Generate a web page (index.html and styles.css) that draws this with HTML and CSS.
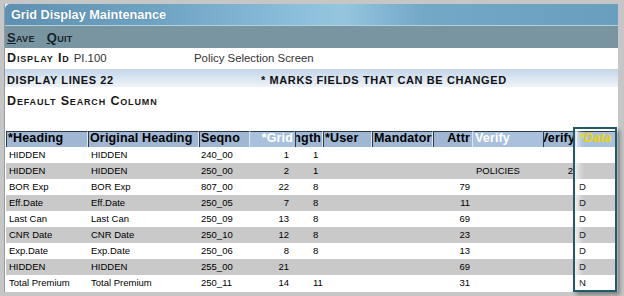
FILE: index.html
```html
<!DOCTYPE html>
<html>
<head>
<meta charset="utf-8">
<link rel="stylesheet" href="styles.css">
</head>
<body>
<div class="window">
  <div class="titlebar">Grid Display Maintenance</div>
  <div class="toolbar"><span class="cmd"><u>S</u>ave</span><span class="cmd"><u>Q</u>uit</span></div>
  <div class="idrow"><span class="idcell"><span class="sc">Display Id</span><span class="idval">PI.100</span></span><span class="desc">Policy Selection Screen</span></div>
  <div class="linesrow"><span class="linescell">DISPLAY LINES 22</span><span>* MARKS FIELDS THAT CAN BE CHANGED</span></div>
  <div class="searchrow"><span class="sc">Default Search Column</span></div>
  <table class="grid">
    <colgroup>
      <col class="c1"><col class="c2"><col class="c3"><col class="c4"><col class="c5"><col class="c6"><col class="c7"><col class="c8"><col class="c9"><col class="c10"><col class="c11">
    </colgroup>
    <thead>
      <tr>
        <th><div class="h">*Heading</div></th>
        <th><div class="h">Original Heading</div></th>
        <th><div class="h">Seqno</div></th>
        <th class="hl"><div class="h right">*Grid</div></th>
        <th><div class="h right">Length</div></th>
        <th><div class="h">*User</div></th>
        <th><div class="h">Mandatory</div></th>
        <th><div class="h right pr">Attr</div></th>
        <th class="hl"><div class="h">Verify</div></th>
        <th><div class="h right">Verify</div></th>
        <th class="hl data"><div class="h">*Data</div></th>
      </tr>
    </thead>
    <tbody>
      <tr><td class="t1">HIDDEN</td><td class="t2">HIDDEN</td><td class="t3">240_00</td><td class="t4">1</td><td class="t5">1</td><td></td><td></td><td class="t8"></td><td class="t9"></td><td class="t10"></td><td class="t11"></td></tr>
      <tr><td class="t1">HIDDEN</td><td class="t2">HIDDEN</td><td class="t3">250_00</td><td class="t4">2</td><td class="t5">1</td><td></td><td></td><td class="t8"></td><td class="t9">POLICIES</td><td class="t10">2</td><td class="t11"></td></tr>
      <tr><td class="t1">BOR Exp</td><td class="t2">BOR Exp</td><td class="t3">807_00</td><td class="t4">22</td><td class="t5">8</td><td></td><td></td><td class="t8">79</td><td class="t9"></td><td class="t10"></td><td class="t11">D</td></tr>
      <tr><td class="t1">Eff.Date</td><td class="t2">Eff.Date</td><td class="t3">250_05</td><td class="t4">7</td><td class="t5">8</td><td></td><td></td><td class="t8">11</td><td class="t9"></td><td class="t10"></td><td class="t11">D</td></tr>
      <tr><td class="t1">Last Can</td><td class="t2">Last Can</td><td class="t3">250_09</td><td class="t4">13</td><td class="t5">8</td><td></td><td></td><td class="t8">69</td><td class="t9"></td><td class="t10"></td><td class="t11">D</td></tr>
      <tr><td class="t1">CNR Date</td><td class="t2">CNR Date</td><td class="t3">250_10</td><td class="t4">12</td><td class="t5">8</td><td></td><td></td><td class="t8">23</td><td class="t9"></td><td class="t10"></td><td class="t11">D</td></tr>
      <tr><td class="t1">Exp.Date</td><td class="t2">Exp.Date</td><td class="t3">250_06</td><td class="t4">8</td><td class="t5">8</td><td></td><td></td><td class="t8">13</td><td class="t9"></td><td class="t10"></td><td class="t11">D</td></tr>
      <tr><td class="t1">HIDDEN</td><td class="t2">HIDDEN</td><td class="t3">255_00</td><td class="t4">21</td><td class="t5"></td><td></td><td></td><td class="t8">69</td><td class="t9"></td><td class="t10"></td><td class="t11">D</td></tr>
      <tr><td class="t1">Total Premium</td><td class="t2">Total Premium</td><td class="t3">250_11</td><td class="t4">14</td><td class="t5">11</td><td></td><td></td><td class="t8">31</td><td class="t9"></td><td class="t10"></td><td class="t11">N</td></tr>
    </tbody>
  </table>
  <div class="focus"></div>
</div>
</body>
</html>
```

FILE: styles.css
```css
html, body {
  margin: 0;
  padding: 0;
}
body {
  width: 624px;
  height: 296px;
  overflow: hidden;
  background: #c6c6c6;
  font-family: "Liberation Sans", Arial, sans-serif;
}
.window {
  position: relative;
  margin: 4px 0 0 4px;
  width: 613px;
  height: 288px;
  background: #fff;
  border-left: 1px solid #8e9da7;
}
.titlebar {
  height: 22px;
  line-height: 22px;
  padding-left: 6px;
  border-radius: 5px 0 0 0;
  background: linear-gradient(90deg, #5d90b2 0%, #6fa3c4 25%, #8cbfdb 48%, #96c6df 55%, #73a8c7 68%, #6a9ebe 100%);
  border-bottom: 1px solid #b6cfdd;
  box-sizing: border-box;
  color: #fff;
  font-weight: bold;
  font-size: 12.7px;
  text-shadow: 0 0 1px rgba(40, 80, 110, 0.5);
}
.toolbar {
  height: 22px;
  box-sizing: border-box;
  padding: 2px 0 0 2px;
  line-height: 20px;
  background: #7995a1;
  display: flex;
  gap: 12px;
  font-weight: bold;
  font-variant: small-caps;
  font-size: 13px;
  letter-spacing: 0.3px;
  color: #15242d;
}
.idrow {
  height: 21px;
  line-height: 21px;
  padding-left: 2px;
  display: flex;
  font-size: 11.4px;
  color: #222;
}
.idcell {
  width: 187px;
  display: flex;
  gap: 4px;
}
.idval {
  color: #333;
}
.sc {
  font-weight: bold;
  font-variant: small-caps;
  font-size: 12.5px;
  letter-spacing: 0.85px;
  color: #1a1a1a;
}
.desc {
  color: #333;
}
.linesrow {
  height: 18px;
  box-sizing: border-box;
  padding: 2px 0 0 2px;
  line-height: 18px;
  display: flex;
  background: linear-gradient(180deg, #c2d5e7 0%, #dce7f2 55%, #eef3f9 100%);
  font-weight: bold;
  font-size: 11px;
  letter-spacing: 0.6px;
  color: #111;
  white-space: nowrap;
}
.linescell {
  width: 254px;
}
.searchrow {
  height: 23px;
  box-sizing: border-box;
  padding: 3px 0 0 2px;
  line-height: 20px;
  color: #111;
}
.grid {
  margin: 21px 0 0 1px;
  width: 610px;
  table-layout: fixed;
  border-collapse: separate;
  border-spacing: 0;
}
.c1 { width: 82px; }
.c2 { width: 111px; }
.c3 { width: 51px; }
.c4 { width: 45px; }
.c5 { width: 28px; }
.c6 { width: 49px; }
.c7 { width: 61px; }
.c8 { width: 40px; }
.c9 { width: 70px; }
.c10 { width: 34px; }
.c11 { width: 39px; }
.grid th {
  padding: 0;
  border-top: 1px solid #2e3a44;
  border-left: 1px solid #2e3a44;
  border-right: 1px solid #dde7f1;
  background: #9fb7d3;
  text-align: left;
}
.grid th.hl {
  border-left-color: #a9c1dd;
  border-right-color: #a9c1dd;
  background: #a9c1dd;
  color: #fff;
}
.grid th.data {
  color: #f1d400;
  font-style: italic;
}
.h {
  height: 15px;
  line-height: 13px;
  display: flex;
  overflow: hidden;
  white-space: nowrap;
  padding-left: 1px;
  font-size: 12.5px;
  font-weight: bold;
  letter-spacing: 0.15px;
}
.h.right {
  justify-content: flex-end;
  padding-left: 0;
  padding-right: 1px;
}
.h.pr {
  padding-right: 2px;
}
.grid td {
  height: 16px;
  padding: 0;
  line-height: 16px;
  font-size: 9.5px;
  color: #000;
  white-space: nowrap;
  overflow: hidden;
}
.grid tbody tr:nth-child(even) td {
  background: #c9c9c9;
}
.grid td.t1 { padding-left: 3px; }
.grid td.t2 { padding-left: 3px; }
.grid td.t3 { padding-left: 2px; }
.grid td.t4 { text-align: right; padding-right: 6px; }
.grid td.t5 { padding-left: 18px; }
.grid td.t8 { text-align: right; padding-right: 3px; }
.grid td.t9 { padding-left: 3px; }
.grid td.t10 { text-align: right; padding-right: 4px; }
.grid td.t11 { padding-left: 2px; }
.focus {
  position: absolute;
  left: 568px;
  top: 123px;
  width: 40px;
  height: 161px;
  border: 2px solid #1f5b69;
  box-shadow: 3px 3px 4px rgba(0, 0, 0, 0.35), inset 8px 0 7px -5px rgba(255, 255, 255, 0.85);
}
```
